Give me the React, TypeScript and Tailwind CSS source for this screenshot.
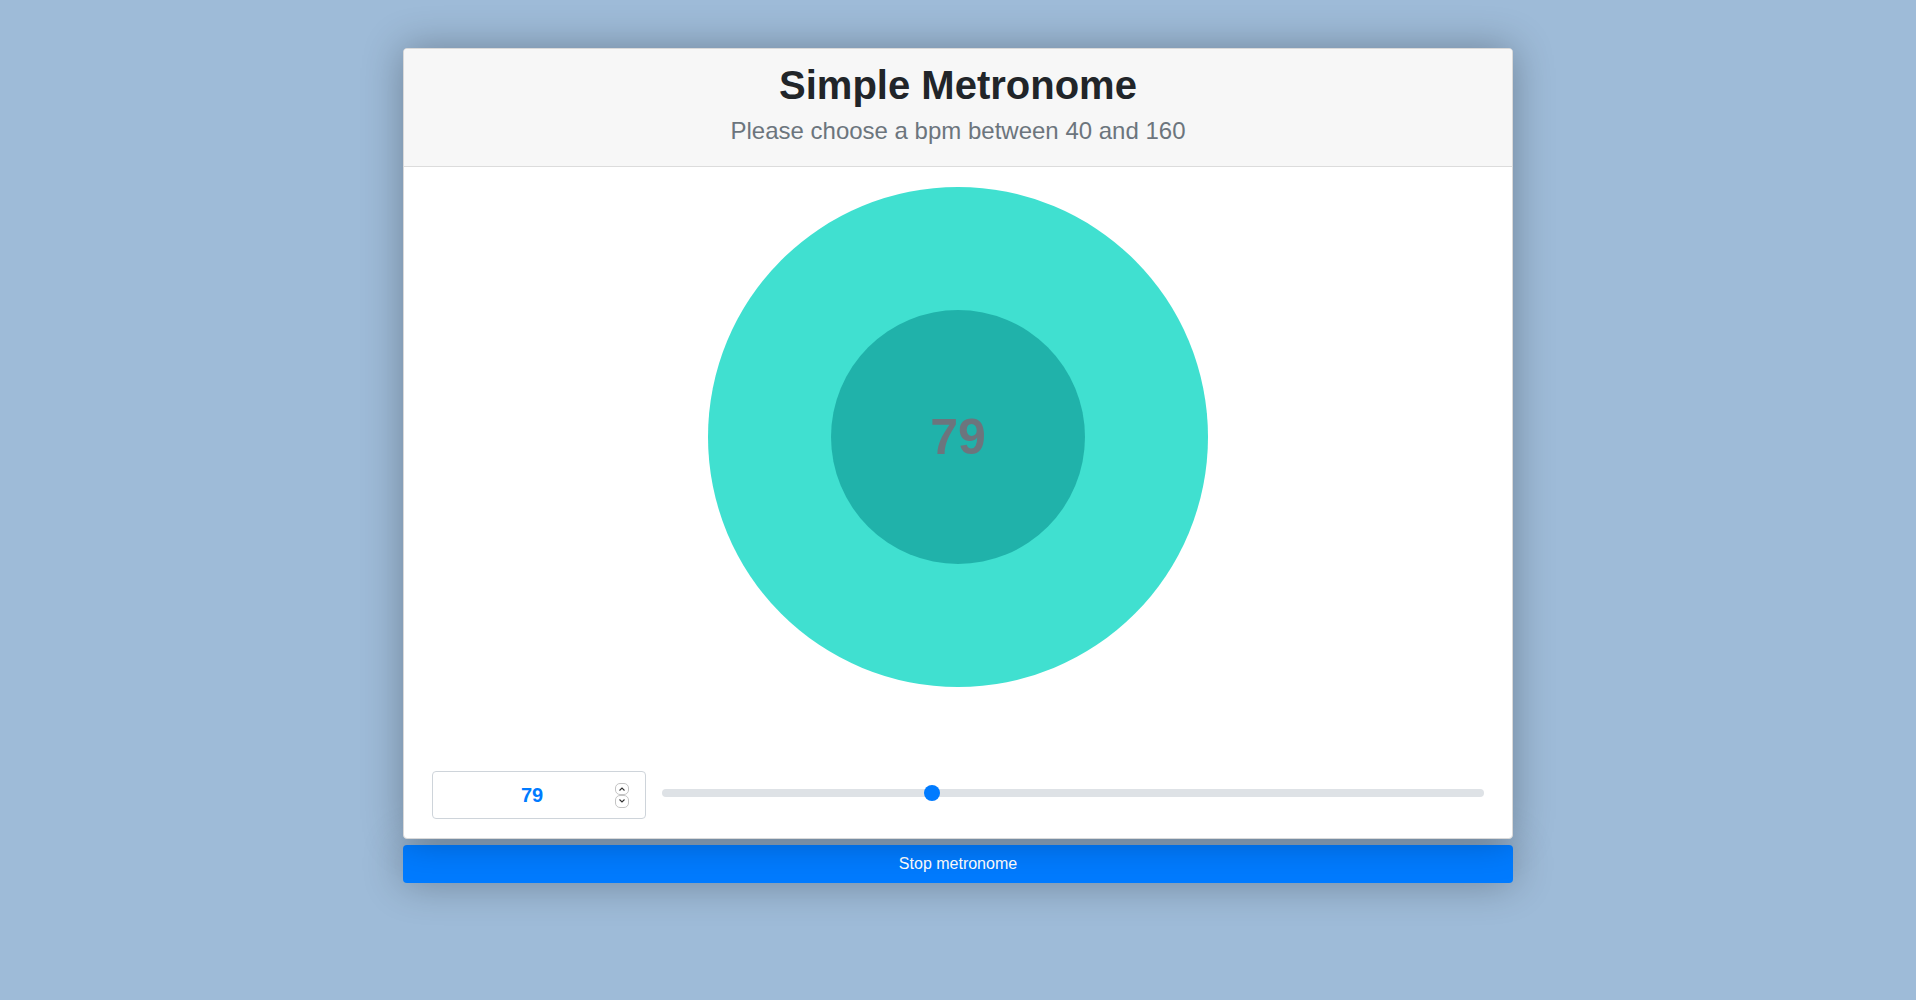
import { useState } from "react";

const MIN_BPM = 40;
const MAX_BPM = 160;

function Spinner() {
  return (
    <div className="flex flex-col w-[14px] h-[25px]">
      <div className="flex-1 flex items-center justify-center border border-[#c4c4c4] rounded-[5px]">
        <svg width="8" height="6" viewBox="0 0 8 6" fill="none">
          <path d="M1.5 4.5 L4 2 L6.5 4.5" stroke="#333" strokeWidth="1.1" />
        </svg>
      </div>
      <div className="flex-1 flex items-center justify-center border border-[#c4c4c4] rounded-[5px]">
        <svg width="8" height="6" viewBox="0 0 8 6" fill="none">
          <path d="M1.5 1.5 L4 4 L6.5 1.5" stroke="#333" strokeWidth="1.1" />
        </svg>
      </div>
    </div>
  );
}

export default function App() {
  const [bpm, setBpm] = useState(79);
  const pct = (bpm - MIN_BPM) / (MAX_BPM - MIN_BPM);

  return (
    <div className="min-h-screen bg-[#9ebbd8] pt-[48px] font-['Liberation_Sans',Arial,sans-serif]">
      <div className="mx-auto w-[1110px]">
        <div className="relative z-10 bg-white border border-[#d9d9d9] rounded-[4px] overflow-hidden shadow-[0_0_40px_rgba(0,0,0,0.3)]">
          <div className="bg-[#f7f7f7] border-b border-[#dcdcdc] pt-[12px] pb-[21px] text-center">
            <h1 className="text-[40px] leading-[48px] font-bold text-[#212529]">Simple Metronome</h1>
            <p className="mt-[7px] text-[24px] leading-[29px] text-[#6c757d]">
              Please choose a bpm between {MIN_BPM} and {MAX_BPM}
            </p>
          </div>

          <div className="pt-[20px] pb-[19px]">
            <div className="mx-auto w-[500px] h-[500px] rounded-full bg-[#40e0d0] flex items-center justify-center">
              <div className="w-[254px] h-[254px] rounded-full bg-[#20b2aa] flex items-center justify-center">
                <span className="text-[50px] font-bold text-[#6c757d]">{bpm}</span>
              </div>
            </div>

            <div className="mt-[84px] px-[28px] flex items-center gap-[16px]">
              <div className="w-[214px] h-[48px] border border-[#ced4da] rounded-[4px] flex items-center pl-[16px] pr-[16px]">
                <span className="flex-1 text-center text-[20px] font-bold text-[#007bff]">{bpm}</span>
                <Spinner />
              </div>
              <div className="flex-1 relative h-[16px] mb-[4px] flex items-center">
                <div className="w-full h-[8px] rounded-full bg-[#dee2e6]" />
                <div
                  className="absolute top-0 w-[16px] h-[16px] rounded-full bg-[#007bff]"
                  style={{ left: `calc(${pct} * (100% - 16px))` }}
                />
                <input
                  type="range"
                  min={MIN_BPM}
                  max={MAX_BPM}
                  value={bpm}
                  onChange={(e) => setBpm(Number(e.target.value))}
                  className="absolute inset-0 w-full opacity-0 cursor-pointer"
                />
              </div>
            </div>
          </div>
        </div>

        <button className="block mt-[6px] w-full h-[38px] bg-[#007bff] rounded-[4px] text-white text-[16px] shadow-[0_0_40px_rgba(0,0,0,0.3)]">
          Stop metronome
        </button>
      </div>
    </div>
  );
}
